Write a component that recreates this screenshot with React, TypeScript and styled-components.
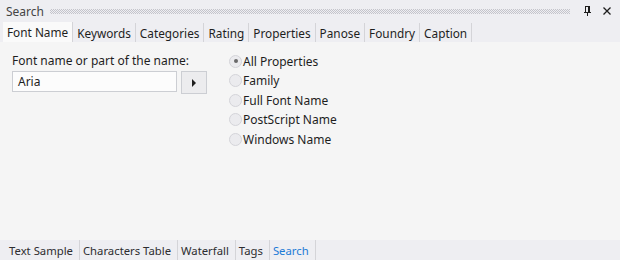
import React from "react";
import styled, { createGlobalStyle } from "styled-components";

const Global = createGlobalStyle`
  html, body { margin: 0; padding: 0; }
  body { width: 620px; height: 260px; overflow: hidden; background: #f5f5f5; }
  * { box-sizing: border-box; }
`;

const Panel = styled.div`
  width: 620px;
  height: 260px;
  display: flex;
  flex-direction: column;
  font-family: "Segoe UI", "Noto Sans", sans-serif;
  font-size: 12px;
  color: #1e1e1e;
  background: #f5f5f5;
`;

const TitleBar = styled.div`
  height: 22px;
  display: flex;
  align-items: center;
  background: #eeeef2;
  padding: 0 6px 0 6px;
  gap: 6px;
`;

const Title = styled.span`
  color: #444;
  font-size: 12px;
`;

const Grip = styled.div`
  flex: 1;
  height: 5px;
  background: repeating-conic-gradient(#c4c4cb 0 25%, transparent 0 50%) 0 0 / 2px 2px;
  margin-right: 4px;
`;

const IconBtn = styled.span`
  width: 14px;
  height: 14px;
  display: flex;
  align-items: center;
  justify-content: center;
`;

const TabStrip = styled.div`
  display: flex;
  align-items: flex-end;
  height: 20px;
  padding-left: 3px;
  background: #eeeef2;
`;

const Tab = styled.div<{ $active?: boolean }>`
  height: ${(p) => (p.$active ? "20px" : "19px")};
  padding: 0 4px;
  display: flex;
  align-items: center;
  background: ${(p) => (p.$active ? "#fafafa" : "#eeeef2")};
  border-right: 1px solid #d4d4d8;
  color: #1e1e1e;
  font-size: 11.8px;
  white-space: nowrap;
`;

const Body = styled.div`
  flex: 1;
  display: flex;
  padding: 11px 12px;
  gap: 22px;
`;

const LeftCol = styled.div`
  display: flex;
  flex-direction: column;
  gap: 2px;
`;

const Label = styled.div`
  font-size: 12px;
  line-height: 16px;
`;

const InputRow = styled.div`
  display: flex;
  gap: 4px;
`;

const TextBox = styled.div`
  width: 165px;
  height: 21px;
  background: #fcfcfc;
  border: 1px solid #ccced3;
  padding: 0 5px;
  display: flex;
  align-items: center;
  font-size: 12px;
`;

const GoButton = styled.div`
  width: 26px;
  height: 23px;
  background: #ececee;
  border: 1px solid #ccced3;
  display: flex;
  align-items: center;
  justify-content: center;
`;

const RadioList = styled.div`
  display: flex;
  flex-direction: column;
  gap: 3px;
`;

const RadioRow = styled.div`
  display: flex;
  align-items: center;
  gap: 1px;
  height: 16.5px;
  font-size: 12px;
`;

const RadioCircle = styled.span<{ $checked?: boolean }>`
  width: 13px;
  height: 13px;
  border-radius: 50%;
  border: 1px solid #d4d4d9;
  background: #ebebee;
  display: flex;
  align-items: center;
  justify-content: center;
  &::after {
    content: "";
    width: 4px;
    height: 4px;
    border-radius: 50%;
    background: ${(p) => (p.$checked ? "#6a6a6a" : "transparent")};
  }
`;

const BottomStrip = styled.div`
  height: 20px;
  display: flex;
  align-items: stretch;
  background: #eeeef2;
  padding-left: 6px;
`;

const BottomTab = styled.div<{ $active?: boolean }>`
  display: flex;
  align-items: center;
  padding: 0 6px 0 3px;
  border-right: 1px solid #d4d4d8;
  color: ${(p) => (p.$active ? "#1c7ad6" : "#2d2d30")};
  font-size: 11.3px;
  white-space: nowrap;
`;

const topTabs = ["Font Name", "Keywords", "Categories", "Rating", "Properties", "Panose", "Foundry", "Caption"];
const radios = ["All Properties", "Family", "Full Font Name", "PostScript Name", "Windows Name"];
const bottomTabs = ["Text Sample", "Characters Table", "Waterfall", "Tags", "Search"];

export default function App() {
  return (
    <Panel>
      <Global />
      <TitleBar>
        <Title>Search</Title>
        <Grip />
        <IconBtn>
          <svg width="10" height="12" viewBox="0 0 10 12">
            <path d="M3 1h4M3 1v6M7 1v6M6 1v6M1.5 7h7M5 7v4" stroke="#1e1e1e" strokeWidth="1" fill="none" shapeRendering="crispEdges" />
          </svg>
        </IconBtn>
        <IconBtn>
          <svg width="10" height="10" viewBox="0 0 10 10">
            <path d="M1.5 1.5l7 7M8.5 1.5l-7 7" stroke="#1e1e1e" strokeWidth="1.3" fill="none" />
          </svg>
        </IconBtn>
      </TitleBar>
      <TabStrip>
        {topTabs.map((t, i) => (
          <Tab key={t} $active={i === 0}>
            {t}
          </Tab>
        ))}
      </TabStrip>
      <Body>
        <LeftCol>
          <Label>Font name or part of the name:</Label>
          <InputRow>
            <TextBox>Aria</TextBox>
            <GoButton>
              <svg width="6" height="10" viewBox="0 0 6 10">
                <path d="M1 1l4 4-4 4z" fill="#1e1e1e" />
              </svg>
            </GoButton>
          </InputRow>
        </LeftCol>
        <RadioList>
          {radios.map((r, i) => (
            <RadioRow key={r}>
              <RadioCircle $checked={i === 0} />
              {r}
            </RadioRow>
          ))}
        </RadioList>
      </Body>
      <BottomStrip>
        {bottomTabs.map((t, i) => (
          <BottomTab key={t} $active={i === bottomTabs.length - 1}>
            {t}
          </BottomTab>
        ))}
      </BottomStrip>
    </Panel>
  );
}
